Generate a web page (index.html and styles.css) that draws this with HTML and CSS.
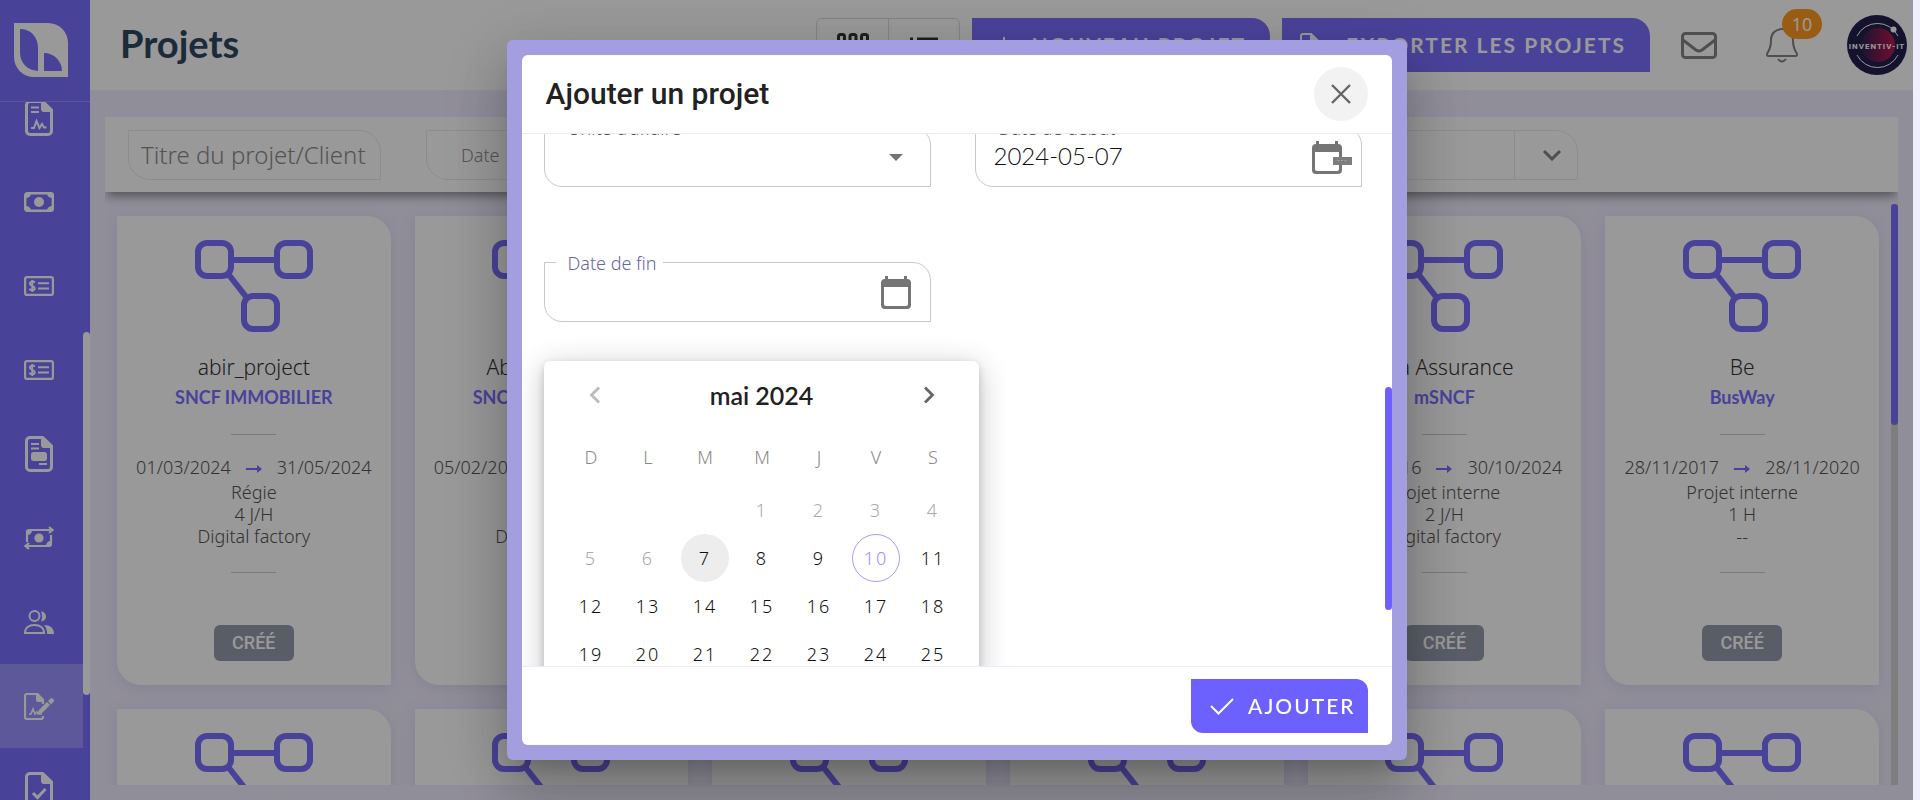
FILE: index.html
```html
<!DOCTYPE html>
<html lang="fr">
<head>
<meta charset="utf-8">
<title>Projets</title>
<link rel="stylesheet" href="styles.css">
</head>
<body>
<svg class="sprite" aria-hidden="true">
  <symbol id="i-project" viewBox="0 0 118 93"><g fill="none" stroke="currentColor" stroke-width="6"><rect x="3" y="3" width="33" height="33" rx="9"/><rect x="82" y="3" width="33" height="33" rx="9"/><rect x="49" y="56" width="33" height="33" rx="9"/><path d="M36 20h46M34 35l18 23"/></g></symbol>
  <symbol id="i-arrow" viewBox="0 0 16 8"><path d="M0 3h11V0l5 4-5 4V5H0z" fill="currentColor"/></symbol>
  <symbol id="i-bill" viewBox="0 0 30 20"><rect x="1.2" y="1.2" width="27.6" height="17.6" rx="2" fill="none" stroke="currentColor" stroke-width="2.4"/><path d="M1 1h6c0 3-2 5-6 5zM29 1h-6c0 3 2 5 6 5zM1 19h6c0-3-2-5-6-5zM29 19h-6c0-3 2-5 6-5z" fill="currentColor"/><circle cx="15" cy="10" r="5" fill="currentColor"/></symbol>
  <symbol id="i-check" viewBox="0 0 30 20"><rect x="1.1" y="1.1" width="27.8" height="17.8" rx="2" fill="none" stroke="currentColor" stroke-width="2.2"/><path d="M11 6.500C9 5 5.800 5.500 5.800 7.600c0 2.800 4.900 1.700 4.900 4.600 0 2.400-3.700 2.500-5.500.9M8.200 4v12M14 7.300h11M14 12.500h11" fill="none" stroke="currentColor" stroke-width="2"/></symbol>
  <symbol id="i-doc" viewBox="0 0 28 36"><path d="M4 1.500h13.500L26.500 10v21a3.500 3.500 0 0 1-3.500 3.500H5A3.500 3.500 0 0 1 1.500 31V5A3.500 3.500 0 0 1 5 1.500z" fill="none" stroke="currentColor" stroke-width="3"/><path d="M16 1h3l8 8v3h-8a3 3 0 0 1-3-3z" fill="currentColor"/></symbol>
</svg>

<div class="app">
  <aside class="sidebar">
    <a class="logo" href="#" aria-label="Accueil"><svg width="54" height="54" viewBox="0 0 54 54"><path d="M0 0h34a20 20 0 0 1 20 20v34H20A20 20 0 0 1 0 34z" fill="#fff"/><path d="M6 6c11 0 18 8 18 19v23C13 47 6 40 6 29zM30 30c10 0 18 8 18 18H30z" fill="#7b6eff"/></svg></a>
    <div class="side-scroll">
      <nav class="side-nav" aria-label="Menu principal">
        <a href="#" aria-label="Rapports"><svg width="28" height="36" viewBox="0 0 28 36"><use href="#i-doc"/><path d="M6 7.500h8M6 12h8M6 28h3l2.500-7 3 7 2.500-4 2 3.500h2.500" fill="none" stroke="currentColor" stroke-width="2"/></svg></a>
        <a href="#" aria-label="Paiements"><svg width="30" height="20"><use href="#i-bill"/></svg></a>
        <a href="#" aria-label="Salaires"><svg width="30" height="20"><use href="#i-check"/></svg></a>
        <a href="#" aria-label="Virements"><svg width="30" height="20"><use href="#i-check"/></svg></a>
        <a href="#" aria-label="Factures"><svg width="28" height="36" viewBox="0 0 28 36"><use href="#i-doc"/><path d="M6 8h8M6 12.500h8M14 28h8" fill="none" stroke="currentColor" stroke-width="2"/><rect x="6" y="16" width="16" height="9" rx="2.500" fill="currentColor"/></svg></a>
        <a href="#" aria-label="Transferts"><svg width="30" height="24" viewBox="0 0 30 24"><path d="M3 16V6a2 2 0 0 1 2-2h22M25 1l3.500 3L25 7M27 9v9a2 2 0 0 1-2 2H2M5 17l-3.500 3L5 23" fill="none" stroke="currentColor" stroke-width="2.200"/><path d="M3 4h5c0 3-2 5-5 5zM27 20h-5c0-3 2-5 5-5z" fill="currentColor"/><circle cx="15" cy="12" r="4.600" fill="currentColor"/></svg></a>
        <a href="#" aria-label="Équipe"><svg width="30" height="24" viewBox="0 0 30 24"><circle cx="10.500" cy="6" r="5" fill="none" stroke="currentColor" stroke-width="2"/><path d="M1 23c0-5 4-8 9.500-8s9.500 3 9.500 8z" fill="none" stroke="currentColor" stroke-width="2"/><path d="M17 1.500a5 5 0 1 1 0 10c1.500-3.500 1.500-6.500 0-10zM20 15c6 0 10 3 10 9h-7c0-4-1-7-3-9z" fill="currentColor"/></svg></a>
        <a class="active" href="#" aria-label="Projets"><svg width="30" height="27" viewBox="0 0 30 27"><path d="M19 8v3M19 23v1a2 2 0 0 1-2 2H3a2 2 0 0 1-2-2V3a2 2 0 0 1 2-2h10" fill="none" stroke="currentColor" stroke-width="2.200"/><path d="M12 0h2l6 6v3h-6a2 2 0 0 1-2-2zM23 9l3 3-8 8-5 2 2-5zM24 8l2-2a2.200 2.200 0 0 1 3.300 3L27 11.500z" fill="currentColor"/><path d="M5 21h2l2-5 2 5 2-2 2 2h3" fill="none" stroke="currentColor" stroke-width="1.600"/></svg></a>
        <a href="#" aria-label="Validations"><svg width="28" height="36" viewBox="0 0 28 36"><use href="#i-doc"/><path d="M8 21l4.500 4.500 8-8.500" fill="none" stroke="currentColor" stroke-width="3"/></svg></a>
      </nav>
      <span class="side-thumb"></span>
    </div>
  </aside>

  <div class="page">
    <header class="topbar">
      <h1>Projets</h1>
      <div class="toggle">
        <button type="button" aria-label="Grille"><svg width="32" height="24" viewBox="0 0 32 24" fill="none" stroke="#333" stroke-width="3"><rect x="1.500" y="1.500" width="6" height="8" rx="2"/><rect x="13" y="1.500" width="6" height="8" rx="2"/><rect x="24.500" y="1.500" width="6" height="8" rx="2"/><rect x="1.500" y="14" width="6" height="8" rx="2"/><rect x="13" y="14" width="6" height="8" rx="2"/><rect x="24.500" y="14" width="6" height="8" rx="2"/></svg></button>
        <button type="button" aria-label="Liste"><svg width="28" height="17" viewBox="0 0 28 17" stroke="#333" stroke-width="3"><path d="M0 2h3M7 2h21M0 8.500h3M7 8.500h21M0 15h3M7 15h21"/></svg></button>
      </div>
      <button class="cta" type="button"><svg width="20" height="20" viewBox="0 0 20 20" stroke="#fff" stroke-width="2"><path d="M10 2v16M2 10h16"/></svg>NOUVEAU PROJET</button>
      <button class="cta cta-export" type="button"><svg width="20" height="24" viewBox="0 0 20 24" fill="none" stroke="#fff" stroke-width="2"><path d="M3 1h8l7 7v13a2 2 0 0 1-2 2H3a2 2 0 0 1-2-2V3a2 2 0 0 1 2-2z"/><path d="M11 1v7h7z" fill="#fff"/></svg>EXPORTER LES PROJETS</button>
      <div class="tools">
        <button class="icon-btn" type="button" aria-label="Messages"><svg width="36" height="27" viewBox="0 0 36 27" fill="none" stroke="#848484" stroke-width="3"><rect x="1.500" y="1.500" width="33" height="24" rx="3"/><path d="M2 8l13 10q3 2 6 0L34 8"/></svg></button>
        <button class="icon-btn bell" type="button" aria-label="Notifications"><svg width="32" height="36" viewBox="0 0 32 36" fill="none" stroke="#848484" stroke-width="2"><path d="M16 2c-7 0-11 5-11 11 0 6-1 9-3 12s-1 4 1 4h26c2 0 3-1 1-4s-3-6-3-12c0-6-4-11-11-11zM12 32q4 5 8 0"/></svg><span class="badge">10</span></button>
        <a class="avatar" href="#" aria-label="Profil"><svg width="60" height="60" viewBox="0 0 60 60"><defs><linearGradient id="g"><stop offset="0" stop-color="#2a2152"/><stop offset="1" stop-color="#bd1850"/></linearGradient></defs><circle cx="30" cy="30" r="30" fill="#241f4e"/><circle cx="31" cy="30" r="17" fill="url(#g)"/><path d="M10 21a23 23 0 0 1 41 0M10 40a23 23 0 0 0 41 0" fill="none" stroke="#fff"/><circle cx="46.500" cy="14.500" r="3" fill="#fff"/><text x="30" y="33.500" text-anchor="middle" class="avatar-text">INVENTIV-IT</text></svg></a>
      </div>
    </header>

    <main class="content">
      <form class="filters">
        <input class="leaf search" type="text" aria-label="Titre du projet ou client" placeholder="Titre du projet/Client">
        <input class="leaf date" type="text" aria-label="Date" placeholder="Date">
        <div class="leaf combo"><select aria-label="Statut"><option></option></select><svg width="20" height="12" viewBox="0 0 20 12" fill="none" stroke="#848484" stroke-width="3"><path d="M2 2l8 8 8-8"/></svg></div>
      </form>
      <div class="list"><div class="cards" id="cards"></div><div class="track"><span></span></div></div>
    </main>
  </div>
</div>

<div class="backdrop">
  <section class="modal" role="dialog" aria-modal="true" aria-labelledby="dlg">
    <header class="modal-head">
      <h2 id="dlg">Ajouter un projet</h2>
      <button class="close" type="button" aria-label="Fermer"><svg width="20" height="20" viewBox="0 0 20 20" stroke="#666" stroke-width="2.400"><path d="M1 1l18 18M19 1L1 19"/></svg></button>
    </header>
    <div class="modal-body">
      <form class="fields" id="project-form">
        <div class="field"><label for="bu">Unité d'affaire</label><select id="bu"><option></option></select><svg class="caret" width="14" height="7" viewBox="0 0 14 7"><path d="M0 0h14L7 7z" fill="#757575"/></svg></div>
        <div class="field"><label for="start">Date de début</label><input id="start" type="text" value="2024-05-07"><button class="cal-btn" type="button" aria-label="Choisir la date de début"><svg width="30" height="33" viewBox="0 0 30 33"><path d="M4 0h3v3h16V0h3v3a4 4 0 0 1 4 4v22a4 4 0 0 1-4 4H4a4 4 0 0 1-4-4V7a4 4 0 0 1 4-4zM3 11v17q0 2 2 2h20q2 0 2-2V11z" fill="#757575"/></svg><span class="hint">- - -</span></button></div>
        <div class="field focus"><label for="end">Date de fin</label><input id="end" type="text"><button class="cal-btn" type="button" aria-label="Choisir la date de fin"><svg width="30" height="33" viewBox="0 0 30 33"><path d="M4 0h3v3h16V0h3v3a4 4 0 0 1 4 4v22a4 4 0 0 1-4 4H4a4 4 0 0 1-4-4V7a4 4 0 0 1 4-4zM3 11v17q0 2 2 2h20q2 0 2-2V11z" fill="#757575"/></svg></button></div>
      </form>
      <div class="calendar">
        <div class="cal-head">
          <button type="button" aria-label="Mois précédent" disabled><svg width="12" height="18" viewBox="0 0 12 18" fill="none" stroke="currentColor" stroke-width="2.800"><path d="M10 1.500L2.500 9l7.500 7.500"/></svg></button>
          <strong>mai 2024</strong>
          <button type="button" aria-label="Mois suivant"><svg width="12" height="18" viewBox="0 0 12 18" fill="none" stroke="currentColor" stroke-width="2.800"><path d="M2 1.500L9.500 9 2 16.500"/></svg></button>
        </div>
        <table>
          <thead><tr><th>D</th><th>L</th><th>M</th><th>M</th><th>J</th><th>V</th><th>S</th></tr></thead>
          <tbody>
            <tr class="off"><td></td><td></td><td></td><td>1</td><td>2</td><td>3</td><td>4</td></tr>
            <tr><td class="off">5</td><td class="off">6</td><td><span class="start">7</span></td><td>8</td><td>9</td><td><span class="today">10</span></td><td>11</td></tr>
            <tr><td>12</td><td>13</td><td>14</td><td>15</td><td>16</td><td>17</td><td>18</td></tr>
            <tr><td>19</td><td>20</td><td>21</td><td>22</td><td>23</td><td>24</td><td>25</td></tr>
          </tbody>
        </table>
      </div>
      <span class="modal-thumb"></span>
    </div>
    <footer class="modal-foot"><button class="submit" type="submit" form="project-form"><svg width="24" height="17" viewBox="0 0 24 17" fill="none" stroke="#fff" stroke-width="2"><path d="M1 8l7.500 7.500L23 1"/></svg>AJOUTER</button></footer>
  </section>
</div>
<script src="cards.js"></script>
</body>
</html>
```
FILE: styles.css
```css
* { box-sizing: border-box; }
body { margin: 0; height: 100vh; overflow: hidden; background: #f1edff; font-family: "Noto Sans", "Open Sans", sans-serif; font-weight: 300; color: #333; }
button, input, select { font: inherit; color: inherit; border: 0; background: none; padding: 0; margin: 0; outline: 0; }
svg { display: block; flex: none; }
h1, h2, h3, p { margin: 0; }
a { color: inherit; text-decoration: none; }
.sprite { position: absolute; width: 0; height: 0; }

.app { display: flex; height: 100vh; margin-right: 7px; }

/* Sidebar */
.sidebar { width: 90px; flex: none; display: flex; flex-direction: column; background: #7b6eff; color: #fff; }
.logo { height: 102px; flex: none; padding: 23px 14px; border-bottom: 1px solid #9a90ff; }
.side-scroll { flex: 1; min-height: 0; overflow: hidden; position: relative; }
.side-nav { margin-top: -26px; width: 83px; }
.side-nav a { height: 84px; padding-right: 5px; display: flex; align-items: center; justify-content: center; }
.side-nav a.active { background: #9b93ff; }
.side-thumb { position: absolute; right: 0; top: 33%; width: 7px; height: 52%; border-radius: 4px; background: #fff; }

/* Top bar */
.page { flex: 1; min-width: 0; display: flex; flex-direction: column; }
.topbar { height: 90px; flex: none; display: flex; align-items: center; padding: 0 6px 0 30px; background: #fff; }
.topbar h1 { flex: 1; padding-bottom: 4px; font: 700 38px/48px Lato, sans-serif; color: #2f4860; }
.toggle { display: flex; height: 54px; border: 1px solid #dcdcdc; border-radius: 6px; margin-right: 12px; }
.toggle button { width: 71px; display: grid; place-items: center; }
.toggle button + button { border-left: 1px solid #dcdcdc; }
.cta { height: 54px; padding: 0 24px 0 22px; display: flex; align-items: center; gap: 17px; background: #7b6eff; color: #fff; font: 700 21px/30px Lato, sans-serif; letter-spacing: 2px; border-radius: 0 18px 0 0; margin-right: 12px; }
.cta-export { padding-left: 18px; gap: 26px; margin-right: 31px; }
.tools { display: flex; align-items: center; gap: 49px; }
.bell { position: relative; }
.badge { position: absolute; left: 16px; top: -18px; width: 40px; height: 30px; border-radius: 15px; background: #ff9a1f; color: #fff; font-size: 18px; line-height: 30px; text-align: center; font-weight: 400; }
.avatar-text { font: 700 8px Roboto, sans-serif; fill: #fff; letter-spacing: 1px; }

/* Filters */
.content { flex: 1; min-height: 0; display: flex; flex-direction: column; padding: 27px 15px 15px; }
.filters { height: 75px; flex: none; display: flex; align-items: center; gap: 45px; padding: 0 23px; background: #fff; box-shadow: 0 6px 10px -2px #888; clip-path: inset(0 0 -20px 0); z-index: 1; }
.leaf { height: 50px; border: 1px solid #eaeaea; border-radius: 0 22px 0 22px; background: #fff; }
.search { width: 253px; padding: 0 12px; font-size: 24px; }
.date { width: 500px; padding: 0 34px; font-size: 18px; }
.leaf::placeholder { color: #8c8c8c; opacity: 1; }
.combo { flex: 0 1 607px; display: flex; align-items: center; padding-right: 15px; }
.combo select { flex: 1; height: 100%; appearance: none; border-right: 1px solid #eaeaea; margin-right: 27px; }

/* Cards */
.list { flex: 1; min-height: 0; display: flex; margin-top: 12px; }
.cards { flex: 1; overflow: hidden; display: grid; grid-template-columns: repeat(6, 1fr); gap: 24px; align-content: start; padding: 12px; }
.card { height: 469px; background: #fff; border-radius: 0 24px 0 24px; box-shadow: 0 3px 16px #ded9f2; padding: 24px 0; display: flex; flex-direction: column; align-items: center; white-space: nowrap; color: #555; }
.card-icon { color: #7b6eff; }
.card h3 { margin-top: 19px; font-size: 21px; font-weight: 300; line-height: 30px; color: #333; }
.client { font: 700 18px/30px Lato, sans-serif; color: #7b6eff; }
.rule { width: 45px; height: 1px; background: #ccc; margin: 22px 0 20px; }
.meta + .rule { margin-top: 25px; }
.dates { display: flex; align-items: center; gap: 15px; font-size: 18px; line-height: 24px; margin-bottom: 2px; }
.dates svg { color: #7b6eff; margin-top: 4px; }
.meta { font-size: 18px; line-height: 22px; }
.state { margin-top: auto; height: 36px; padding: 0 18px; border-radius: 6px; background: #959cab; color: #fff; font: 500 18px/36px Roboto, sans-serif; }
.track { width: 7px; background: #d3d3d1; }
.track span { display: block; height: 38%; border-radius: 4px; background: #7b6eff; }

/* Dialog */
.backdrop { position: fixed; inset: 0 7px 0 0; display: grid; place-items: center; background: rgba(0, 0, 0, .4); z-index: 5; }
.modal { width: 900px; height: 90vh; display: flex; flex-direction: column; border: 15px solid #a39edf; border-radius: 6px; background: #a39edf; color: #222; box-shadow: 0 17px 23px -11px rgba(0, 0, 0, .2), 0 36px 57px 5px rgba(0, 0, 0, .14), 0 14px 69px 12px rgba(0, 0, 0, .12); }
.modal-head { height: 79px; flex: none; display: flex; align-items: center; justify-content: space-between; padding: 0 24px; background: #fff; border-radius: 6px 6px 0 0; border-bottom: 1px solid #ebe9fb; }
.modal-head h2 { font: 500 30px/36px Roboto, sans-serif; }
.close { width: 54px; height: 54px; border-radius: 50%; background: #f2f2f2; display: grid; place-items: center; }
.modal-body { flex: 1; min-height: 0; overflow: hidden; position: relative; padding: 0 30px 0 22px; background: #fff; }
.fields { display: grid; grid-template-columns: 1fr 1fr; gap: 75px 44px; margin-top: -7px; }
.field { position: relative; height: 60px; display: flex; align-items: center; padding: 0 19px 0 18px; border: 1px solid #c8c8c8; border-radius: 0 18px 0 18px; }
.field label { position: absolute; left: 11px; top: -12px; padding: 0 6px 0 12px; background: #fff; font-size: 18px; line-height: 24px; color: #555; }
.field.focus label { color: #6b64a8; }
.field input, .field select { flex: 1; min-width: 0; height: 100%; padding-bottom: 3px; appearance: none; font: 300 24px/30px Lato, sans-serif; color: #111; }
.caret { margin-right: 8px; }
.cal-btn { position: relative; }
.hint { position: absolute; left: 21px; top: 16px; width: 19px; height: 8px; background: #7d7d7d; color: #fff; font-size: 6px; line-height: 7px; text-align: center; }
.calendar { width: 435px; margin-top: 39px; padding: 0 17px 18px 19px; border-radius: 6px; background: #fff; box-shadow: 0 3px 8px -1px rgba(0, 0, 0, .2), 0 6px 30px rgba(0, 0, 0, .24); }
.cal-head { height: 68px; padding: 0 27px 0 26px; display: flex; align-items: center; justify-content: space-between; color: #666; }
.cal-head button:disabled { color: #bbb; }
.cal-head strong { font: 600 25px/30px Lato, sans-serif; color: #222; }
.calendar table { width: 100%; border-collapse: collapse; table-layout: fixed; text-align: center; font-size: 18px; color: #111; }
.calendar th { height: 57px; padding: 0 0 2px; font-weight: 300; color: #888; }
.calendar td { height: 48px; padding: 0; letter-spacing: 2px; }
.calendar .off { color: #aaa; }
.start, .today { display: block; width: 48px; height: 48px; margin: 0 auto; border-radius: 50%; line-height: 48px; }
.start { background: #ededed; }
.today { border: 1px solid #a59cff; color: #9a90ff; line-height: 46px; }
.modal-thumb { position: absolute; right: 0; top: 253px; width: 7px; height: 42%; border-radius: 4px; background: #6c61ff; }
.modal-foot { height: 79px; flex: none; display: flex; align-items: center; justify-content: flex-end; padding: 0 24px; background: #fff; border-radius: 0 0 6px 6px; border-top: 1px solid #ebe9fb; }
.submit { height: 54px; padding: 0 12px 0 19px; display: flex; align-items: center; gap: 14px; background: #6c61ff; color: #fff; border-radius: 0 12px 0 12px; font: 500 21px/30px Lato, sans-serif; letter-spacing: 2px; }
```
FILE: cards.js
```js
const projects = [
  ["abir_project", "SNCF IMMOBILIER", "01/03/2024", "31/05/2024", "Régie", "4 J/H", "Digital factory"],
  ["Abir projet 22", "SNCF IMMOBILIER", "05/02/2024", "31/05/2024", "Régie", "4 J/H", "Digital factory"],
  ["Application", "BusWay", "01/01/2024", "31/12/2024", "Régie", "1 J/H", "Digital factory"],
  ["Audit", "BusWay", "01/01/2024", "31/12/2024", "Régie", "1 J/H", "Digital factory"],
  ["Axa Assurance", "mSNCF", "01/01/2016", "30/10/2024", "Projet interne", "2 J/H", "Digital factory"],
  ["Be", "BusWay", "28/11/2017", "28/11/2020", "Projet interne", "1 H", "--"]
];
const card = ([name, client, from, to, kind, load, unit]) => `
  <article class="card">
    <svg class="card-icon" width="118" height="93"><use href="#i-project"/></svg>
    <h3>${name}</h3>
    <p class="client">${client}</p>
    <div class="rule"></div>
    <div class="dates"><span>${from}</span><svg width="16" height="8"><use href="#i-arrow"/></svg><span>${to}</span></div>
    <p class="meta">${kind}</p><p class="meta">${load}</p><p class="meta">${unit}</p>
    <div class="rule"></div>
    <span class="state">CRÉÉ</span>
  </article>`;
document.getElementById("cards").innerHTML = [...projects, ...projects].map(card).join("");
```
